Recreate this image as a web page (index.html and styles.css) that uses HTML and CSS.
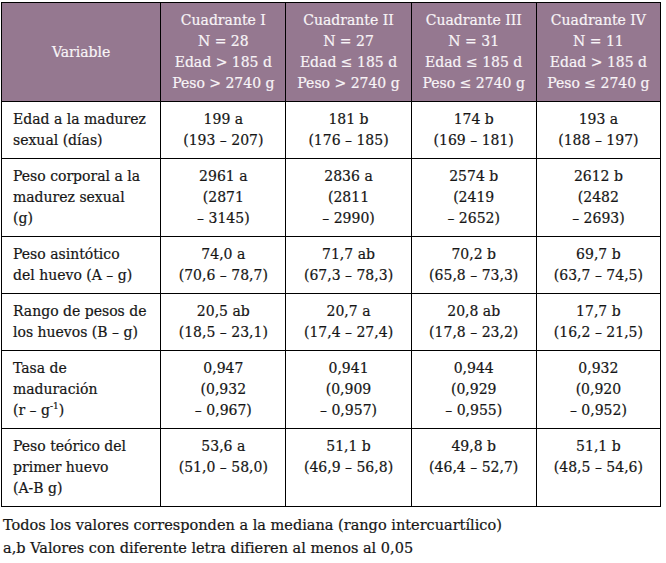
FILE: index.html
```html
<!DOCTYPE html>
<html lang="es">
<head>
<meta charset="utf-8">
<link rel="stylesheet" href="styles.css">
</head>
<body>
<div class="wrap">
<table class="tbl">
<colgroup>
<col class="c0"><col class="c1"><col class="c2"><col class="c3"><col class="c4">
</colgroup>
<thead>
<tr>
<th class="var">Variable</th>
<th>Cuadrante I<br>N = 28<br>Edad &gt; 185 d<br>Peso &gt; 2740 g</th>
<th>Cuadrante II<br>N = 27<br>Edad ≤ 185 d<br>Peso &gt; 2740 g</th>
<th>Cuadrante III<br>N = 31<br>Edad ≤ 185 d<br>Peso ≤ 2740 g</th>
<th>Cuadrante IV<br>N = 11<br>Edad &gt; 185 d<br>Peso ≤ 2740 g</th>
</tr>
</thead>
<tbody>
<tr>
<td class="lbl">Edad a la madurez<br>sexual (días)</td>
<td>199 a<br>(193 – 207)</td>
<td>181 b<br>(176 – 185)</td>
<td>174 b<br>(169 – 181)</td>
<td>193 a<br>(188 – 197)</td>
</tr>
<tr>
<td class="lbl">Peso corporal a la<br>madurez sexual<br>(g)</td>
<td>2961 a<br>(2871<br>– 3145)</td>
<td>2836 a<br>(2811<br>– 2990)</td>
<td>2574 b<br>(2419<br>– 2652)</td>
<td>2612 b<br>(2482<br>– 2693)</td>
</tr>
<tr>
<td class="lbl">Peso asintótico<br>del huevo (A – g)</td>
<td>74,0 a<br>(70,6 – 78,7)</td>
<td>71,7 ab<br>(67,3 – 78,3)</td>
<td>70,2 b<br>(65,8 – 73,3)</td>
<td>69,7 b<br>(63,7 – 74,5)</td>
</tr>
<tr>
<td class="lbl">Rango de pesos de<br>los huevos (B – g)</td>
<td>20,5 ab<br>(18,5 – 23,1)</td>
<td>20,7 a<br>(17,4 – 27,4)</td>
<td>20,8 ab<br>(17,8 – 23,2)</td>
<td>17,7 b<br>(16,2 – 21,5)</td>
</tr>
<tr>
<td class="lbl">Tasa de<br>maduración<br>(r – g<sup>-1</sup>)</td>
<td>0,947<br>(0,932<br>– 0,967)</td>
<td>0,941<br>(0,909<br>– 0,957)</td>
<td>0,944<br>(0,929<br>– 0,955)</td>
<td>0,932<br>(0,920<br>– 0,952)</td>
</tr>
<tr>
<td class="lbl">Peso teórico del<br>primer huevo<br>(A-B g)</td>
<td>53,6 a<br>(51,0 – 58,0)</td>
<td>51,1 b<br>(46,9 – 56,8)</td>
<td>49,8 b<br>(46,4 – 52,7)</td>
<td>51,1 b<br>(48,5 – 54,6)</td>
</tr>
</tbody>
</table>
<p class="note">Todos los valores corresponden a la mediana (rango intercuartílico)<br>a,b Valores con diferente letra difieren al menos al 0,05</p>
</div>
</body>
</html>
```
FILE: styles.css
```css
html, body {
  margin: 0;
  padding: 0;
  background: #ffffff;
}
.wrap {
  padding: 2px 0 0 1px;
  font-family: "DejaVu Serif", "Liberation Serif", serif;
  font-size: 14px;
  color: #161616;
  -webkit-text-stroke: 0.2px currentColor;
}
.tbl {
  border-collapse: collapse;
  table-layout: fixed;
  width: 660px;
  line-height: 21px;
}
.c0 { width: 159px; }
.c1 { width: 125px; }
.c2 { width: 125px; }
.c3 { width: 125px; }
.c4 { width: 124px; }
.tbl th,
.tbl td {
  border: 1px solid #000;
  white-space: nowrap;
  padding: 7px 4px;
  text-align: center;
  vertical-align: top;
}
.tbl th {
  background: #957890;
  color: #f8f4f7;
  font-weight: normal;
  vertical-align: middle;
}
.tbl td.lbl {
  text-align: left;
  padding-left: 11px;
}
.tbl sup {
  font-size: 9px;
  line-height: 0;
  vertical-align: 6px;
}
.note {
  margin: 7px 0 0 2px;
  font-size: 14.5px;
  line-height: 23px;
}
```
